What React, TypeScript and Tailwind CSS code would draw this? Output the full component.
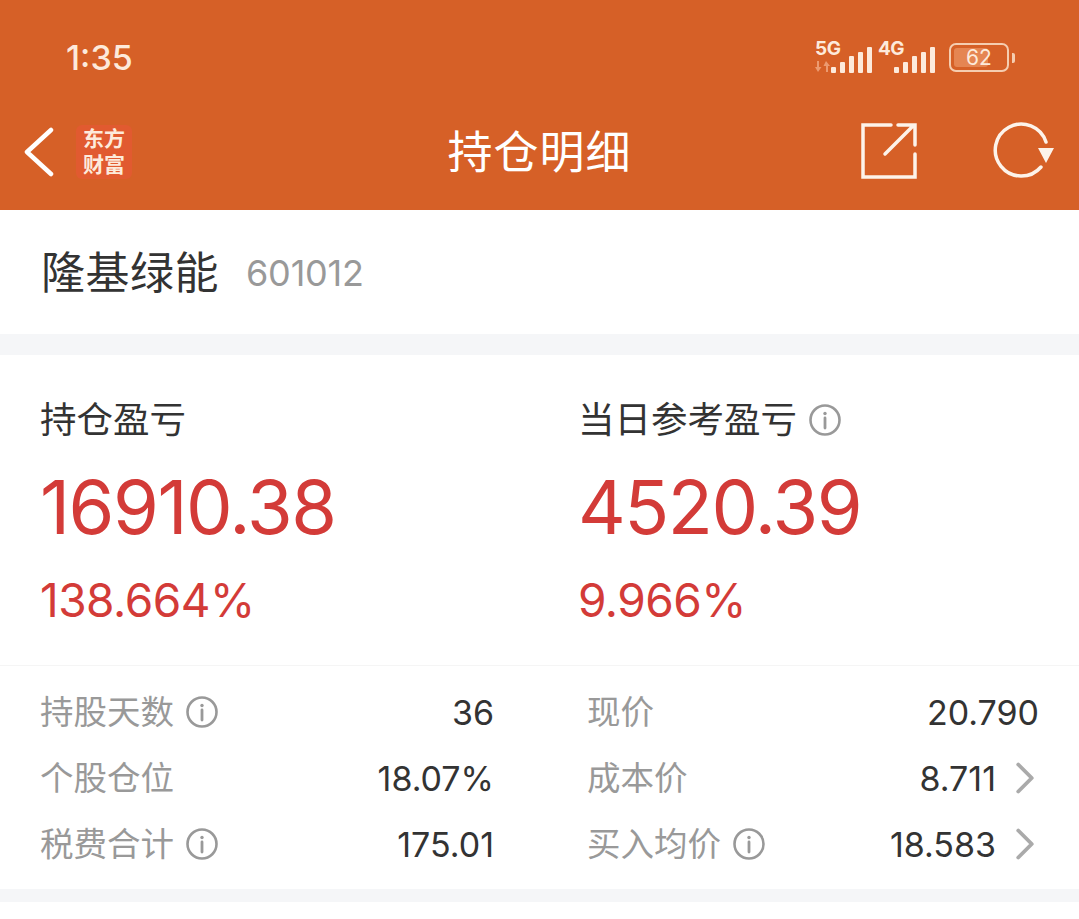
import { ChevronRight } from "lucide-react";

const cjk = "font-['Inter','Noto_Sans_CJK_SC',sans-serif]";

function InfoIcon({ size = 32 }: { size?: number }) {
  return (
    <svg width={size} height={size} viewBox="0 0 32 32" fill="none" stroke="#999999" strokeWidth="2.6">
      <circle cx="16" cy="16" r="14.5" />
      <circle cx="16" cy="9.5" r="1.7" fill="#999999" stroke="none" />
      <path d="M16 14v10" strokeLinecap="round" strokeWidth="2.8" />
    </svg>
  );
}

function Signal({ label, arrows }: { label: string; arrows?: boolean }) {
  return (
    <div className="relative h-[30px] w-[57px]">
      <span className="absolute left-0 top-[-4px] text-[19px] font-bold leading-[20px] tracking-[-0.5px] text-[#fdeadb]">{label}</span>
      {arrows && (
        <svg className="absolute left-0 top-[18px]" width="15" height="11" viewBox="0 0 15 11" fill="#ec9a70">
          <path d="M2 0h2v6h2.5L3 11 0 6h2z" />
          <path d="M11 11h2V5h2l-4-5-2.5 5H11z" />
        </svg>
      )}
      <div className="absolute bottom-0 right-0 flex items-end gap-[4px]">
        <div className="h-[6px] w-[5px] rounded-[1px] bg-[#fdeadb]" />
        <div className="h-[11px] w-[5px] rounded-[1px] bg-[#fdeadb]" />
        <div className="h-[17px] w-[5px] rounded-[1px] bg-[#fdeadb]" />
        <div className="h-[21px] w-[5px] rounded-[1px] bg-[#fdeadb]" />
        <div className="h-[26px] w-[5px] rounded-[1px] bg-[#fdeadb]" />
      </div>
    </div>
  );
}

function Battery() {
  return (
    <div className="flex items-center gap-[3px]">
      <div className="relative h-[29px] w-[60px] overflow-hidden rounded-[7px] border-2 border-[#f5cdb0] p-[3px]">
        <div className="h-full w-[34px] rounded-[3px] bg-[#e58552]" />
        <span className="absolute inset-0 flex items-center justify-center text-[21px] leading-none text-[#fdeadb]">62</span>
      </div>
      <div className="h-[10px] w-[3px] rounded-r-[2px] bg-[#f5cdb0]" />
    </div>
  );
}

function Metric({ title, value, pct, info }: { title: string; value: string; pct: string; info?: boolean }) {
  return (
    <div>
      <div className="flex h-[40px] items-center gap-[12px] text-[36.5px] leading-[40px] text-[#333333]">
        {title}
        {info && <InfoIcon />}
      </div>
      <div className="mt-[29px] text-[74px] leading-[76px] tracking-[-1.5px] text-[#d33b38]">{value}</div>
      <div className="mt-[30px] text-[46px] leading-[50px] tracking-[-0.5px] text-[#d33b38]">{pct}</div>
    </div>
  );
}

function Row({ label, value, info, arrow }: { label: string; value: string; info?: boolean; arrow?: boolean }) {
  return (
    <div className="flex h-[66px] items-center justify-between">
      <div className="flex items-center gap-[12px] text-[33.5px] text-[#999999]">
        {label}
        {info && <InfoIcon />}
      </div>
      <div className="flex items-center text-[34px] text-[#333333]">
        {value}
        {arrow && <ChevronRight size={54} strokeWidth={1.7} className="my-[-10px] ml-[2px] mr-[-13px] text-[#aaaaaa]" />}
      </div>
    </div>
  );
}

export default function App() {
  return (
    <div className={`h-[919px] w-full overflow-hidden bg-white ${cjk}`}>
      <header className="h-[210px] bg-[#d66027] text-white">
        <div className="flex h-[105px] items-center justify-between pl-[66px] pr-[64px] pt-[10px]">
          <span className="text-[34px] font-medium leading-none text-[#fdeadb]">1:35</span>
          <div className="flex items-center gap-[6px]">
            <Signal label="5G" arrows />
            <Signal label="4G" />
            <div className="ml-[8px]">
              <Battery />
            </div>
          </div>
        </div>
        <div className="relative flex h-[95px] items-center justify-center">
          <div className="absolute left-[24px] top-[20px] flex items-center gap-[22px]">
            <svg width="30" height="50" viewBox="0 0 30 50" fill="none" stroke="#fff" strokeWidth="4.5" strokeLinecap="round" strokeLinejoin="round">
              <path d="M27 3 3 25l24 22" />
            </svg>
            <div className="flex h-[54px] w-[56px] flex-col items-center justify-center rounded-[6px] bg-[#e15a30] text-[21px] font-bold leading-[26px] text-[#fdeadb]">
              <span>东方</span>
              <span>财富</span>
            </div>
          </div>
          <h1 className="text-[45px] leading-none tracking-[1px]">持仓明细</h1>
          <div className="absolute right-[25px] top-[17px] flex items-center gap-[74px]">
            <svg width="58" height="58" viewBox="0 0 58 58" fill="none" stroke="#fdf3ea" strokeWidth="3.5" strokeLinecap="round">
              <path d="M31 3H3v52h52V32" />
              <path d="M25 32 54 3M38 3h17v20" />
            </svg>
            <svg width="62" height="58" viewBox="0 0 62 58" fill="none" stroke="#fdf3ea" strokeWidth="3.5" strokeLinecap="round">
              <path d="M54 20A26 26 0 1 0 49 45" />
              <path d="M46 26h16l-8 15z" fill="#fdf3ea" stroke="none" />
            </svg>
          </div>
        </div>
      </header>

      <section className="flex h-[124px] items-center gap-[27px] pl-[41px] pt-[1px]">
        <h2 className="text-[44px] leading-none tracking-[0.5px] text-[#333333]">隆基绿能</h2>
        <span className="text-[36px] leading-none tracking-[-0.2px] text-[#999999]">601012</span>
      </section>
      <div className="h-[21px] bg-[#f5f6f8]" />

      <section className="grid h-[310px] grid-cols-[538px_1fr] pl-[40px] pt-[45px]">
        <Metric title="持仓盈亏" value="16910.38" pct="138.664%" />
        <Metric title="当日参考盈亏" value="4520.39" pct="9.966%" info />
      </section>

      <section className="grid grid-cols-[454px_452px] gap-x-[93px] border-t border-[#f5f5f5] px-[40px] pb-[12px] pt-[13px]">
        <div>
          <Row label="持股天数" value="36" info />
          <Row label="个股仓位" value="18.07%" />
          <Row label="税费合计" value="175.01" info />
        </div>
        <div>
          <Row label="现价" value="20.790" />
          <Row label="成本价" value="8.711" arrow />
          <Row label="买入均价" value="18.583" info arrow />
        </div>
      </section>
      <div className="h-[13px] bg-[#f5f6f8]" />
    </div>
  );
}
